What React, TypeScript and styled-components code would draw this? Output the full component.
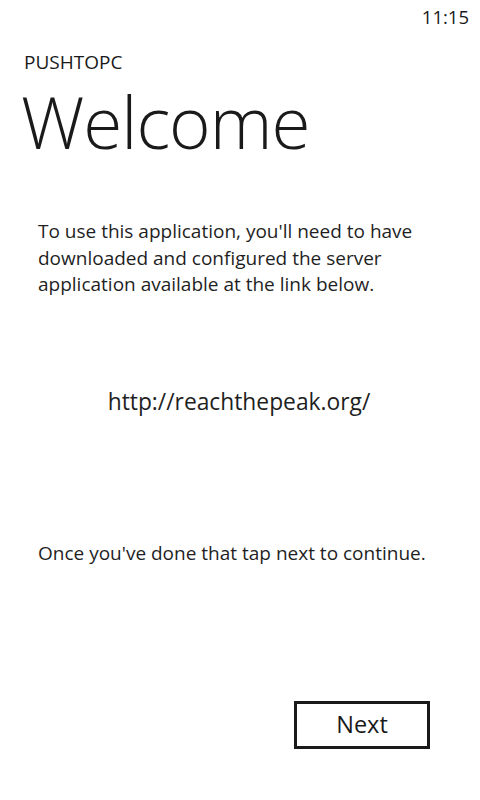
import React from "react";
import styled, { createGlobalStyle } from "styled-components";

const Global = createGlobalStyle`
  html, body { margin: 0; padding: 0; background: #fff; }
  body { font-family: "Open Sans", "Noto Sans", sans-serif; color: #1f1f1f; }
  * { box-sizing: border-box; }
`;

const Screen = styled.div`
  width: 480px;
  height: 800px;
  display: flex;
  flex-direction: column;
  background: #fff;
`;

const StatusBar = styled.div`
  height: 32px;
  display: flex;
  justify-content: flex-end;
  align-items: center;
  padding: 0 11px 0 0;
  font-size: 18.5px;
  color: #1a1a1a;
`;

const Header = styled.div`
  display: flex;
  flex-direction: column;
  padding: 20px 0 0 24px;
`;

const AppName = styled.div`
  font-size: 19px;
  line-height: 20px;
  color: #1a1a1a;
`;

const PageTitle = styled.h1`
  margin: 5px 0 0 -3px;
  font-size: 71px;
  font-weight: 300;
  line-height: 90px;
  letter-spacing: -1px;
  color: #1a1a1a;
`;

const Content = styled.div`
  flex: 1;
  display: flex;
  flex-direction: column;
  padding: 0 20px 0 38px;
`;

const Paragraph = styled.p<{ $top: number }>`
  margin: ${(p) => p.$top}px 0 0;
  font-size: 19px;
  line-height: 26.5px;
  color: #1f1f1f;
`;

const Link = styled.div`
  margin-top: 89px;
  text-align: center;
  font-size: 22.8px;
  line-height: 30px;
  color: #1f1f1f;
  padding-right: 20px;
`;

const Footer = styled.div`
  display: flex;
  justify-content: flex-end;
  padding: 0 50px 51px 0;
`;

const Button = styled.button`
  width: 136px;
  height: 48px;
  border: 3px solid #1a1a1a;
  background: #fff;
  font-family: inherit;
  font-size: 23.5px;
  color: #1a1a1a;
  display: flex;
  align-items: center;
  justify-content: center;
  padding: 0 0 2px;
`;

export default function App() {
  return (
    <Screen>
      <Global />
      <StatusBar>11:15</StatusBar>
      <Header>
        <AppName>PUSHTOPC</AppName>
        <PageTitle>Welcome</PageTitle>
      </Header>
      <Content>
        <Paragraph $top={51}>
          To use this application, you'll need to have downloaded and configured the server
          application available at the link below.
        </Paragraph>
        <Link>http://reachthepeak.org/</Link>
        <Paragraph $top={123}>Once you've done that tap next to continue.</Paragraph>
      </Content>
      <Footer>
        <Button>Next</Button>
      </Footer>
    </Screen>
  );
}
